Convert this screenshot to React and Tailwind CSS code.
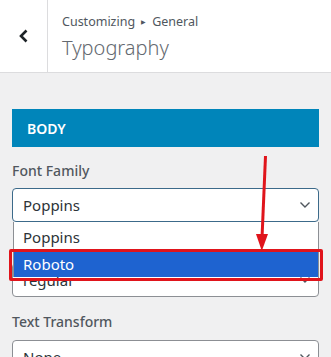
import React from "react";

function Chevron() {
  return (
    <svg width="12" height="8" viewBox="0 0 12 8" className="shrink-0">
      <path d="M1.5 1.5 L6 6 L10.5 1.5" fill="none" stroke="#50575e" strokeWidth="1.4" />
    </svg>
  );
}

function Select({ value, focused }) {
  return (
    <div
      className={
        "h-[34px] bg-white rounded-[4px] flex items-center justify-between pl-[10px] pr-[7px] text-[15px] text-[#2c3338] border " +
        (focused ? "border-[#3c6a8a]" : "border-[#8c8f94]")
      }
    >
      <span>{value}</span>
      <Chevron />
    </div>
  );
}

export default function App() {
  return (
    <div
      className="relative w-[331px] h-[357px] overflow-hidden bg-[#f0f0f1]"
      style={{ fontFamily: '"Noto Sans", "Open Sans", sans-serif' }}
    >
      <div className="h-[73px] bg-white border-b border-[#dcdcde] flex">
        <div className="w-[48px] border-r border-[#dcdcde] flex items-center justify-center">
          <svg width="12" height="14" viewBox="0 0 12 14">
            <path d="M8.5 1.5 L3 7 L8.5 12.5" fill="none" stroke="#1d2327" strokeWidth="2.6" />
          </svg>
        </div>
        <div className="pl-[14px] pt-[12px] flex flex-col">
          <div className="text-[12.5px] leading-[20px] text-[#50575e] flex items-center gap-[6px]">
            <span>Customizing</span>
            <span className="text-[6px] text-[#50575e]">▶</span>
            <span>General</span>
          </div>
          <div className="text-[20px] leading-[28px] font-light text-[#646970] mt-[2px]">Typography</div>
        </div>
      </div>

      <div className="px-[12px] pt-[36px]">
        <div className="h-[38px] bg-[#0085ba] flex items-center px-[15px] text-white text-[14px] font-semibold">
          BODY
        </div>

        <div className="mt-[14px] text-[14px] leading-[20px] font-medium text-[#50575e]">Font Family</div>
        <div className="mt-[7px]">
          <Select value="Poppins" focused />
        </div>

        <div className="mt-[14px] h-[20px]" />
        <div className="mt-[7px]">
          <Select value="regular" />
        </div>

        <div className="mt-[15px] text-[14px] leading-[20px] font-medium text-[#50575e]">Text Transform</div>
        <div className="mt-[8px]">
          <Select value="None" />
        </div>
      </div>

      {/* native dropdown list */}
      <div className="absolute left-[13px] top-[222px] w-[306px] bg-white border-x border-[#8c8f94] text-[15px]">
        <div className="h-[30px] flex items-center pl-[9px] text-[#2c3338]">Poppins</div>
        <div className="h-[25px] flex items-center pl-[9px] bg-[#1e63d0] text-white">Roboto</div>
      </div>

      {/* red highlight */}
      <div className="absolute left-[9px] top-[249px] w-[314px] h-[32px] border-[3px] border-[#e0141b] rounded-[2px]" />

      {/* red arrow */}
      <svg className="absolute left-0 top-0" width="331" height="357" viewBox="0 0 331 357">
        <line x1="265.5" y1="156" x2="262" y2="238" stroke="#e0141b" strokeWidth="3" />
        <polygon points="256,234 268,234 261.8,251" fill="#e0141b" />
      </svg>
    </div>
  );
}
